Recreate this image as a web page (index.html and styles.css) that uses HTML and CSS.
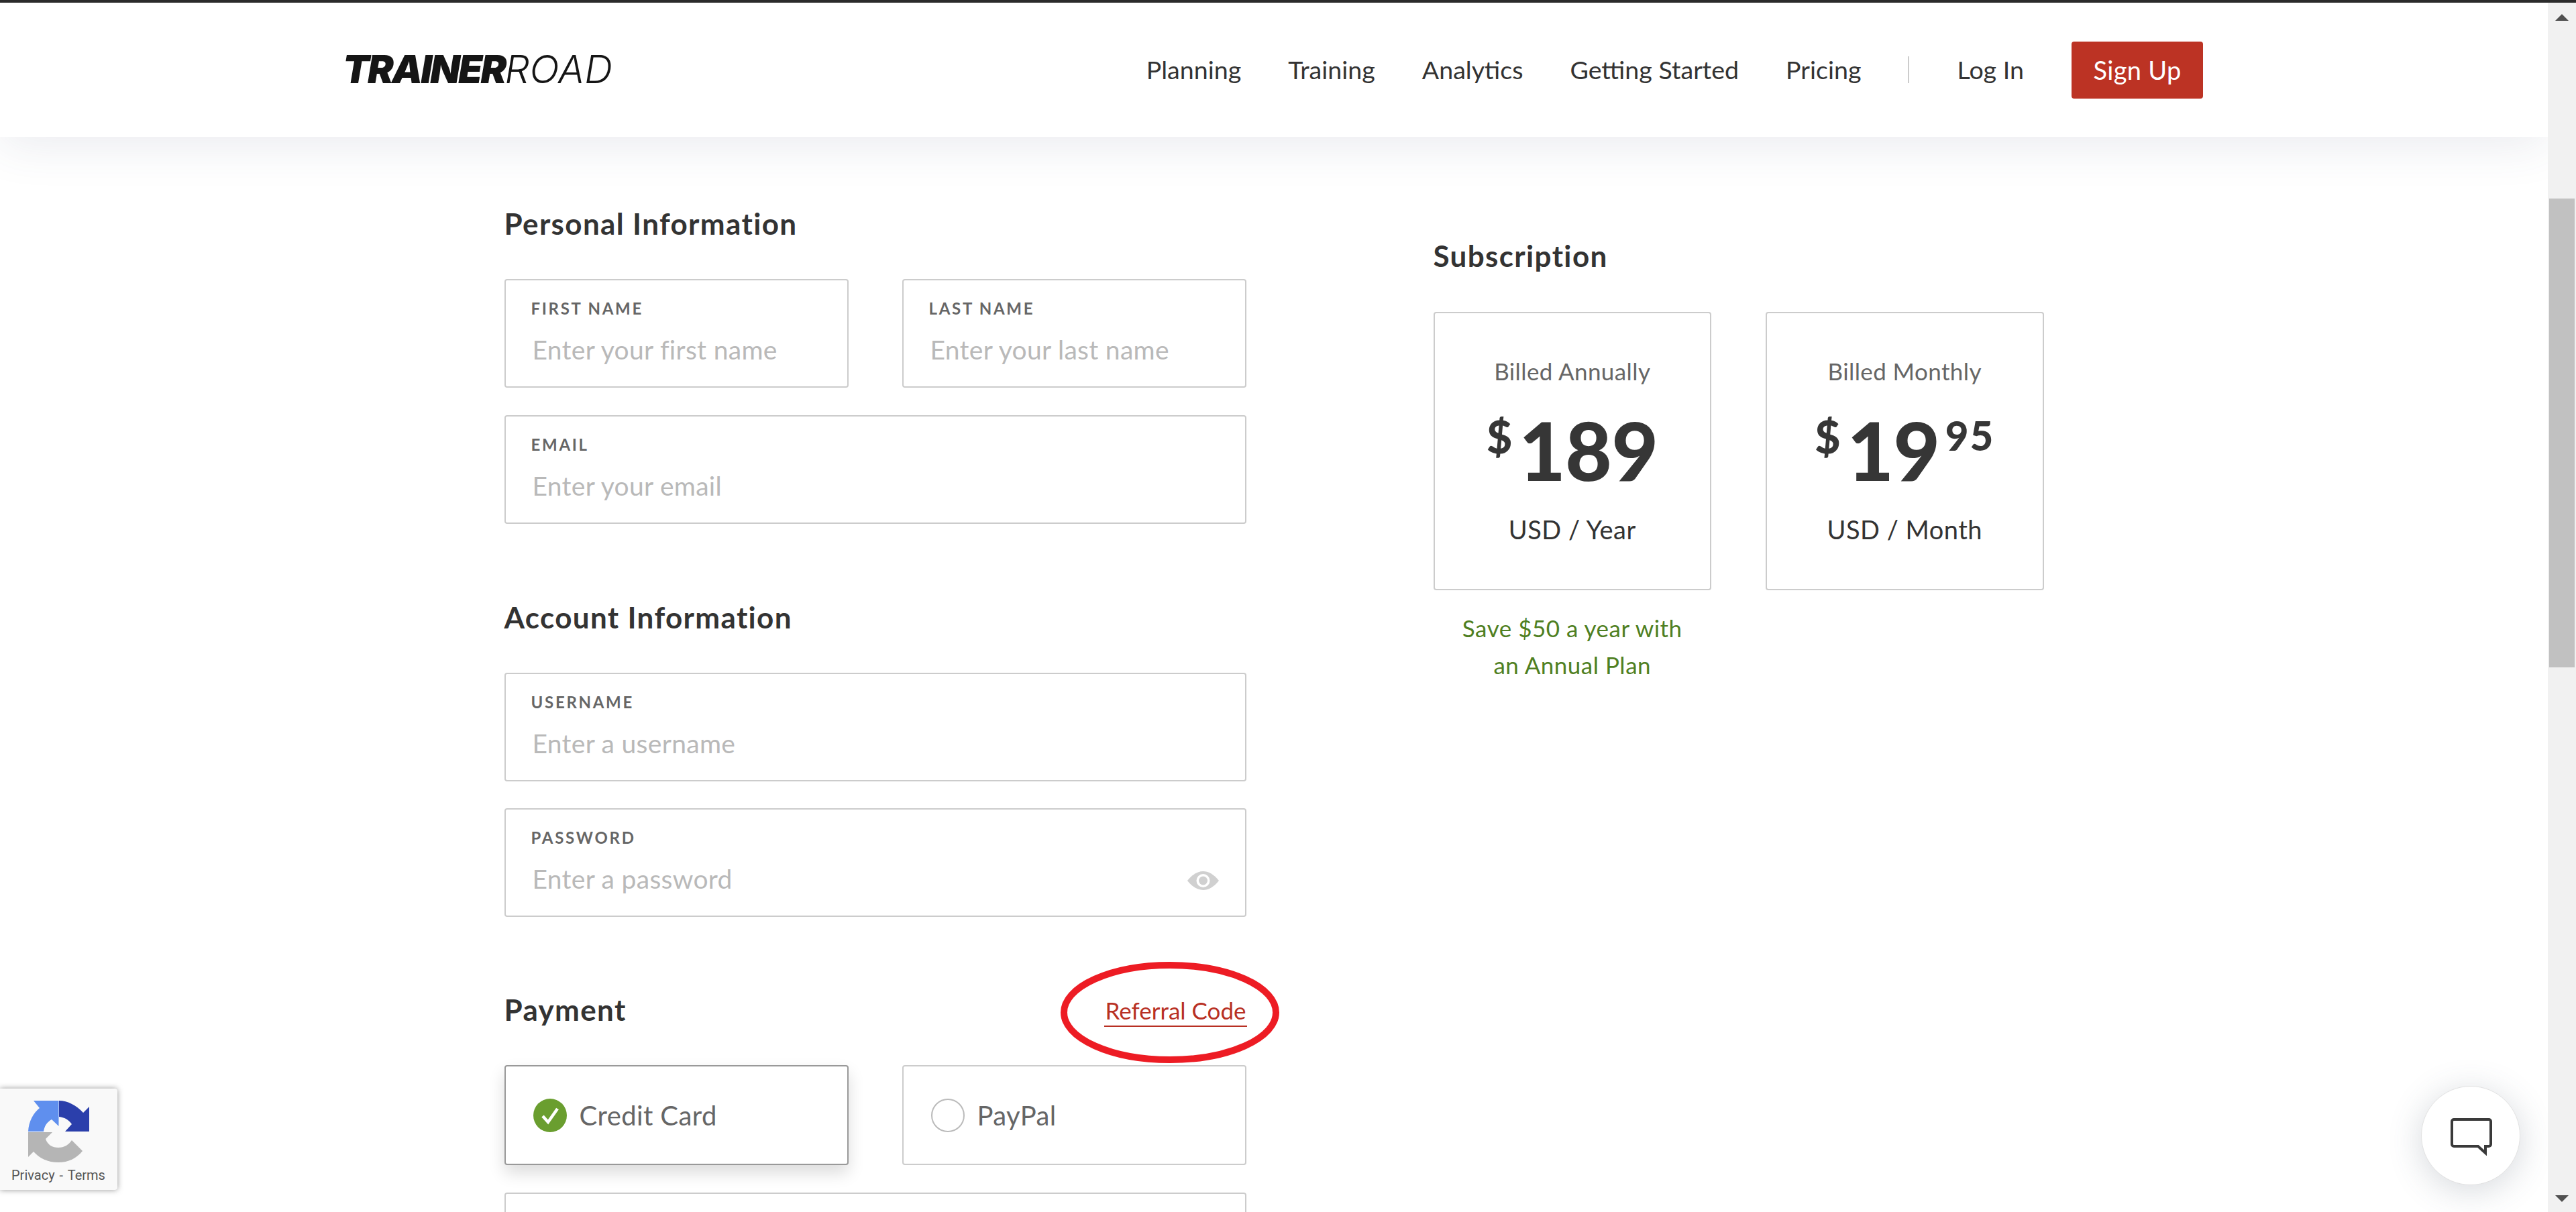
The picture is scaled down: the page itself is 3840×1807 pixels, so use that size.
FILE: index.html
```html
<!DOCTYPE html>
<html lang="en">
<head>
<meta charset="utf-8">
<title>TrainerRoad Sign Up</title>
<link rel="stylesheet" href="styles.css">
</head>
<body>
<div class="topbar"></div>
<div class="viewport">
  <div class="page">
    <header class="site-header">
      <div class="header-inner">
        <a class="logo"><span class="logo-bold">TRAINER</span><span class="logo-light">ROAD</span></a>
        <nav class="nav">
          <a class="nav-link">Planning</a>
          <a class="nav-link">Training</a>
          <a class="nav-link">Analytics</a>
          <a class="nav-link">Getting Started</a>
          <a class="nav-link">Pricing</a>
          <span class="nav-sep"></span>
          <a class="nav-link nav-last">Log In</a>
          <a class="signup">Sign Up</a>
        </nav>
      </div>
    </header>
    <main class="content">
      <section class="form-col">
        <h2 class="heading">Personal Information</h2>
        <div class="row">
          <div class="field"><div class="label">FIRST NAME</div><div class="placeholder">Enter your first name</div></div>
          <div class="field"><div class="label">LAST NAME</div><div class="placeholder">Enter your last name</div></div>
        </div>
        <div class="field"><div class="label">EMAIL</div><div class="placeholder">Enter your email</div></div>

        <h2 class="heading section-gap">Account Information</h2>
        <div class="field"><div class="label">USERNAME</div><div class="placeholder">Enter a username</div></div>
        <div class="field field-eye">
          <div class="label">PASSWORD</div><div class="placeholder">Enter a password</div>
          <svg class="eye" viewBox="0 0 47 28"><path fill="#d0d0d0" d="M0 14C8 4 16 0 23.5 0S39 4 47 14C39 24 31 28 23.5 28S8 24 0 14Z"/><circle cx="23.5" cy="14" r="10" fill="#fff"/><circle cx="23.5" cy="14" r="6.5" fill="#d0d0d0"/></svg>
        </div>

        <div class="payment-head">
          <h2 class="heading">Payment</h2>
          <a class="referral">Referral Code</a>
          <svg class="circle-mark" viewBox="0 0 326 151"><ellipse cx="163" cy="75.5" rx="158" ry="70.5" fill="none" stroke="#ed1c24" stroke-width="10"/></svg>
        </div>
        <div class="row">
          <div class="option selected">
            <svg class="check" viewBox="0 0 50 50"><circle cx="25" cy="25" r="25" fill="#6a9e2f"/><path d="M14 26l8 9 14-20" fill="none" stroke="#fff" stroke-width="4.5"/></svg>
            <span class="option-text">Credit Card</span>
          </div>
          <div class="option">
            <span class="radio"></span>
            <span class="option-text">PayPal</span>
          </div>
        </div>
        <div class="field"></div>
      </section>

      <section class="sub-col">
        <h2 class="heading">Subscription</h2>
        <div class="plans">
          <div class="plan-wrap">
            <div class="plan">
              <div class="billed">Billed Annually</div>
              <div class="price"><span class="dollar">$</span><span class="amount">189</span></div>
              <div class="unit">USD / Year</div>
            </div>
            <p class="save">Save $50 a year with<br>an Annual Plan</p>
          </div>
          <div class="plan-wrap">
            <div class="plan">
              <div class="billed">Billed Monthly</div>
              <div class="price"><span class="dollar">$</span><span class="amount">19</span><span class="cents">95</span></div>
              <div class="unit">USD / Month</div>
            </div>
          </div>
        </div>
      </section>
    </main>

    <div class="recaptcha">
      <svg class="recaptcha-icon" viewBox="0 0 92 92">
        <path fill="#5f8fee" d="M8 0H45.5V38L35 28C28 32 24 38 23 46H0C1 31 7 19 17 11Z"/>
        <path fill="#2b3fab" d="M46 0C59 0 72 7 82 18L91 9V46H55L65 35C60 28 54 25 46 24Z"/>
        <path fill="#b5b5b5" d="M0 47H36L26 57C29 66 36 70 45 70C54 70 60 66 65 59L81 75C72 86 60 92 45 92C29 92 17 86 8 76L0 84Z"/>
      </svg>
      <div class="recaptcha-text">Privacy - Terms</div>
    </div>
    <button class="chat">
      <svg class="chat-icon" viewBox="0 0 62 56"><path fill="none" stroke="#3a3a3a" stroke-width="4" d="M5 2H57a3 3 0 0 1 3 3V39a3 3 0 0 1-3 3H52V52L41 42H5a3 3 0 0 1-3-3V5a3 3 0 0 1 3-3Z"/></svg>
    </button>
  </div>
  <div class="scrollbar">
    <span class="arrow-up"></span>
    <span class="thumb"></span>
    <span class="arrow-down"></span>
  </div>
</div>
</body>
</html>
```
FILE: styles.css
```css
* { box-sizing: border-box; }
html, body { margin: 0; height: 100%; overflow: hidden; }
body {
  display: flex;
  flex-direction: column;
  background: #fff;
  color: #333;
  font-family: Lato, "Open Sans", sans-serif;
}
.topbar { height: 4px; background: #2b2b2b; flex: none; }
.viewport { flex: 1; display: flex; min-height: 0; }
.page { flex: 1; position: relative; overflow: hidden; min-width: 0; }

.site-header {
  height: 200px;
  background: #fff;
  box-shadow: 0 12px 70px rgba(60, 70, 110, 0.11);
  position: relative;
}
.header-inner {
  width: 2770px;
  height: 100%;
  margin: 0 auto;
  display: flex;
  align-items: center;
  justify-content: space-between;
}
.logo {
  font-family: Inter, sans-serif;
  font-style: italic;
  font-size: 58px;
  line-height: 70px;
  color: #151515;
  white-space: nowrap;
  margin: -2px 0 0 -3px;
}
.logo-bold { font-weight: 900; letter-spacing: -2.8px; }
.logo-light { font-weight: 300; letter-spacing: 0.2px; }
.nav { display: flex; align-items: center; }
.nav-link {
  font-size: 37.6px;
  line-height: 50px;
  color: #333;
  margin-right: 70px;
  white-space: nowrap;
}
.nav-last { margin-right: 71px; }
.nav-sep { width: 2px; height: 40px; background: #ccc; margin-right: 71px; }
.signup {
  width: 196px;
  height: 85px;
  background: #bc3324;
  color: #fff;
  border-radius: 4px;
  font-size: 38px;
  letter-spacing: 0.3px;
  line-height: 85px;
  text-align: center;
}

.content {
  width: 2295px;
  margin: 0 auto;
  display: flex;
  justify-content: space-between;
  align-items: flex-start;
  padding-top: 102px;
}
.form-col { width: 1106px; display: flex; flex-direction: column; gap: 41px; flex: none; }
.heading {
  margin: 0 0 15px;
  font-size: 44px;
  line-height: 54px;
  font-weight: 700;
  letter-spacing: 1.35px;
  color: #333;
}
.section-gap { margin-top: 71px; }
.row { display: flex; gap: 80px; }
.row > * { flex: 1; }
.field {
  height: 162px;
  border: 2px solid #ccc;
  border-radius: 4px;
  padding: 27px 38px 0;
  position: relative;
  background: #fff;
}
.field-eye { margin-top: -1px; }
.label {
  font-size: 24px;
  line-height: 30px;
  font-weight: 700;
  letter-spacing: 2.7px;
  color: #666;
}
.placeholder {
  margin: 21px 0 0 2px;
  font-size: 39px;
  letter-spacing: 0.3px;
  line-height: 50px;
  color: #b9b9b9;
}
.eye { position: absolute; right: 39px; top: 92px; width: 47px; height: 28px; }
.payment-head {
  position: relative;
  display: flex;
  justify-content: space-between;
  align-items: flex-start;
  margin-top: 70px;
}
.referral {
  margin: 6px -1px 0 0;
  font-size: 35px;
  line-height: 44px;
  padding: 0 1px 2px;
  color: #b83023;
  border-bottom: 2px solid #b83023;
  height: 47px;
}
.circle-mark {
  position: absolute;
  right: -49px;
  top: -44px;
  width: 326px;
  height: 151px;
  pointer-events: none;
}
.option {
  height: 149px;
  border: 2px solid #ccc;
  border-radius: 4px;
  display: flex;
  align-items: center;
  gap: 19px;
  padding-left: 41px;
  background: #fff;
}
.option.selected {
  border-color: #999;
  box-shadow: 0 12px 24px rgba(0, 0, 0, 0.14);
}
.check { width: 50px; height: 50px; flex: none; }
.radio { width: 50px; height: 50px; border: 2px solid #bbb; border-radius: 50%; flex: none; }
.option-text { font-size: 40px; letter-spacing: 0.4px; line-height: 50px; color: #666; }

.sub-col { width: 910px; flex: none; margin-top: 48px; }
.sub-col .heading { margin-bottom: 57px; }
.plans { display: flex; gap: 81px; }
.plan-wrap { width: 414.5px; }
.plan {
  height: 415px;
  border: 2px solid #ccc;
  border-radius: 4px;
  padding-top: 61px;
  text-align: center;
}
.billed { font-size: 35px; letter-spacing: 0.4px; line-height: 50px; color: #666; }
.price {
  margin-top: 33px;
  height: 120px;
  display: flex;
  justify-content: center;
  align-items: flex-start;
  font-weight: 900;
  color: #363636;
}
.dollar { font-size: 66px; line-height: 60px; margin: 10px 10px 0 0; font-weight: 900; }
.amount { font-size: 120px; line-height: 120px; letter-spacing: -0.5px; }
.cents { font-size: 60px; letter-spacing: 2px; line-height: 60px; margin: 8px 0 0 8px; font-weight: 900; }
.unit { margin-top: 33px; font-size: 38px; letter-spacing: 0.5px; line-height: 50px; color: #333; }
.save {
  margin: 29px 0 0;
  text-align: center;
  font-size: 35px;
  letter-spacing: 0.5px;
  line-height: 55px;
  color: #4f7f22;
}

.recaptcha {
  position: absolute;
  left: 0;
  top: 1619px;
  width: 175px;
  height: 151px;
  background: #f9f9f9;
  border-radius: 0 4px 4px 0;
  box-shadow: 0 0 8px rgba(60, 60, 60, 0.55);
}
.recaptcha-icon { position: absolute; left: 42px; top: 18px; width: 92px; height: 92px; }
.recaptcha-text {
  position: absolute;
  left: 17px;
  top: 117px;
  font-family: Roboto, sans-serif;
  font-size: 20px;
  line-height: 24px;
  color: #555;
  word-spacing: 2px;
  white-space: nowrap;
}
.chat {
  position: absolute;
  left: 3609px;
  top: 1615px;
  width: 148px;
  height: 148px;
  padding: 0;
  border: 1px solid #e2e2e2;
  border-radius: 50%;
  background: #fff;
  box-shadow: 0 8px 50px rgba(70, 80, 100, 0.22);
}
.chat-icon { position: absolute; left: 43px; top: 47px; width: 62px; height: 56px; }

.scrollbar {
  width: 42px;
  flex: none;
  background: #f1f1f1;
  display: flex;
  flex-direction: column;
  align-items: center;
}
.arrow-up {
  margin-top: 17px;
  width: 0; height: 0;
  border-left: 10px solid transparent;
  border-right: 10px solid transparent;
  border-bottom: 10px solid #505050;
}
.thumb { margin-top: 265px; width: 38px; height: 699px; background: #c1c1c1; }
.arrow-down {
  margin-top: auto;
  margin-bottom: 15px;
  width: 0; height: 0;
  border-left: 10px solid transparent;
  border-right: 10px solid transparent;
  border-top: 10px solid #505050;
}
```
